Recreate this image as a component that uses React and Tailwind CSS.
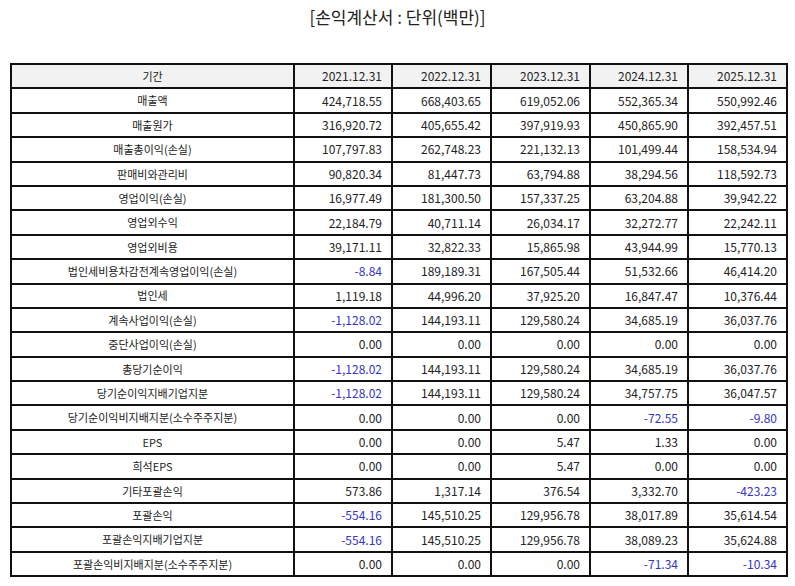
const years = ['2021.12.31', '2022.12.31', '2023.12.31', '2024.12.31', '2025.12.31'];

const rows = [
  ['매출액', '424,718.55', '668,403.65', '619,052.06', '552,365.34', '550,992.46'],
  ['매출원가', '316,920.72', '405,655.42', '397,919.93', '450,865.90', '392,457.51'],
  ['매출총이익(손실)', '107,797.83', '262,748.23', '221,132.13', '101,499.44', '158,534.94'],
  ['판매비와관리비', '90,820.34', '81,447.73', '63,794.88', '38,294.56', '118,592.73'],
  ['영업이익(손실)', '16,977.49', '181,300.50', '157,337.25', '63,204.88', '39,942.22'],
  ['영업외수익', '22,184.79', '40,711.14', '26,034.17', '32,272.77', '22,242.11'],
  ['영업외비용', '39,171.11', '32,822.33', '15,865.98', '43,944.99', '15,770.13'],
  ['법인세비용차감전계속영업이익(손실)', '-8.84', '189,189.31', '167,505.44', '51,532.66', '46,414.20'],
  ['법인세', '1,119.18', '44,996.20', '37,925.20', '16,847.47', '10,376.44'],
  ['계속사업이익(손실)', '-1,128.02', '144,193.11', '129,580.24', '34,685.19', '36,037.76'],
  ['중단사업이익(손실)', '0.00', '0.00', '0.00', '0.00', '0.00'],
  ['총당기순이익', '-1,128.02', '144,193.11', '129,580.24', '34,685.19', '36,037.76'],
  ['당기순이익지배기업지분', '-1,128.02', '144,193.11', '129,580.24', '34,757.75', '36,047.57'],
  ['당기순이익비지배지분(소수주주지분)', '0.00', '0.00', '0.00', '-72.55', '-9.80'],
  ['EPS', '0.00', '0.00', '5.47', '1.33', '0.00'],
  ['희석EPS', '0.00', '0.00', '5.47', '0.00', '0.00'],
  ['기타포괄손익', '573.86', '1,317.14', '376.54', '3,332.70', '-423.23'],
  ['포괄손익', '-554.16', '145,510.25', '129,956.78', '38,017.89', '35,614.54'],
  ['포괄손익지배기업지분', '-554.16', '145,510.25', '129,956.78', '38,089.23', '35,624.88'],
  ['포괄손익비지배지분(소수주주지분)', '0.00', '0.00', '0.00', '-71.34', '-10.34'],
];

const font = { fontFamily: '"Noto Sans CJK KR", "Noto Sans", sans-serif' };

export default function App() {
  return (
    <div className="w-[795px] h-[586px] bg-white text-[#222]" style={font}>
      <h1 className="pt-[4px] h-[63px] text-center text-[17px] leading-[26px] font-normal text-[#222]">
        [손익계산서 : 단위(백만)]
      </h1>
      <table className="ml-[10px] w-[776px] border-collapse table-fixed text-[11px]">
        <colgroup>
          <col className="w-[283px]" />
          <col className="w-[98px]" />
          <col className="w-[99px]" />
          <col className="w-[99px]" />
          <col className="w-[98px]" />
          <col className="w-[99px]" />
        </colgroup>
        <thead>
          <tr className="h-[24.4px] bg-[#f2f2f2]">
            <th className="border-2 border-[#111] font-normal text-center">기간</th>
            {years.map((y) => (
              <th key={y} className="border-2 border-[#111] font-normal text-right text-[12px] pr-[9px]">{y}</th>
            ))}
          </tr>
        </thead>
        <tbody>
          {rows.map(([label, ...vals]) => (
            <tr key={label} className="h-[24.4px]">
              <td className="border-2 border-[#111] text-center">{label}</td>
              {vals.map((v, i) => (
                <td
                  key={i}
                  className={`border-2 border-[#111] text-right text-[12px] pr-[9px] ${v.startsWith('-') ? 'text-[#3434c8]' : ''}`}
                >
                  {v}
                </td>
              ))}
            </tr>
          ))}
        </tbody>
      </table>
    </div>
  );
}
